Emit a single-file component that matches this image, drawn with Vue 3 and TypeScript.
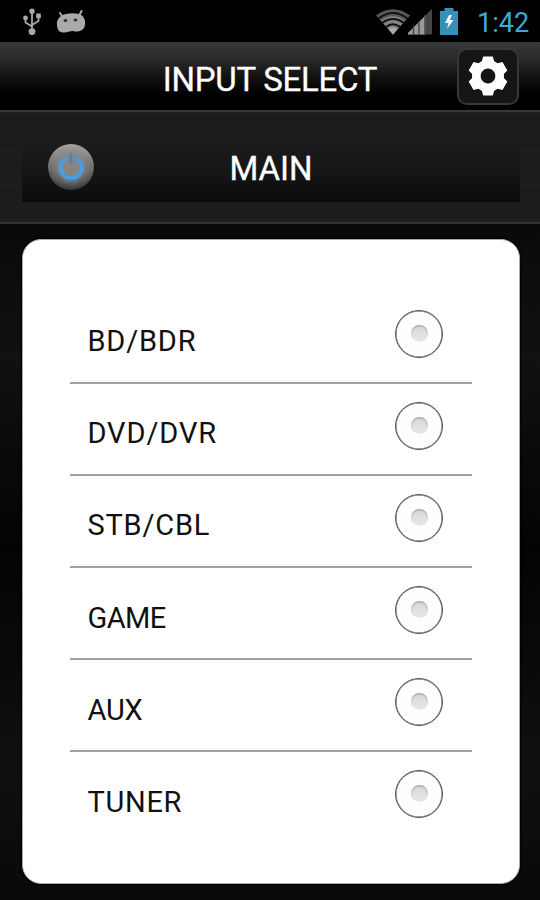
<script setup lang="ts">
import { ref } from 'vue'

interface InputSource {
  id: string
  label: string
  tracking: number
}

const sources: InputSource[] = [
  { id: 'bd', label: 'BD/BDR', tracking: 0.8 },
  { id: 'dvd', label: 'DVD/DVR', tracking: 0.9 },
  { id: 'stb', label: 'STB/CBL', tracking: 0.8 },
  { id: 'game', label: 'GAME', tracking: -0.6 },
  { id: 'aux', label: 'AUX', tracking: -0.2 },
  { id: 'tuner', label: 'TUNER', tracking: 0.7 },
]
const selected = ref<string | null>(null)
const teeth = [0, 60, 120, 180, 240, 300]
</script>

<template>
  <div class="screen">
    <div class="status">
      <svg class="usb" width="20" height="28" viewBox="0 0 20 28" fill="none" stroke="#aaa" stroke-width="1.8">
        <path d="M10 3V23M10 18.500L3.500 14.500V10M10 17L16.500 13V8" />
        <g fill="#aaa" stroke="none">
          <circle cx="10" cy="3.200" r="2.600" />
          <circle cx="10" cy="23.600" r="3.400" />
          <circle cx="3.500" cy="10" r="2.400" />
          <rect x="14.200" y="5.500" width="4.600" height="4.600" />
        </g>
      </svg>
      <svg class="droid" width="30" height="24" viewBox="0 0 30 24">
        <path d="M4 3l4 6M25.500 1l-3 6" stroke="#aaa" stroke-width="2" stroke-linecap="round" />
        <path d="M1 15C0 9 5 5 10 4C16 2.500 22 3 26 5.500C29 8 30 13 28.500 17C26 22 21 22 17 21C13 21 11 23 7 22.500C3 22.500 1 19 1 15Z" fill="#aaa" />
        <ellipse cx="9.500" cy="10.500" rx="1.900" ry="1.500" fill="#333" />
        <ellipse cx="19.500" cy="10" rx="1.900" ry="1.600" fill="#333" />
      </svg>
      <div class="status-right">
        <svg width="34" height="28" viewBox="0 0 34 28">
          <path d="M0 7.500Q17-5 34 7.500L17 26.500Z" fill="#595959" />
          <path d="M5 12.500Q17 4 29 12.500L17 26.500Z" fill="#858585" />
          <path d="M2.500 10.500Q17-.5 31.500 10.500M6 15Q17 7 28 15M9.700 19Q17 13.500 24.300 19" fill="none" stroke="#111" stroke-width="1.800" />
          <path d="M12.500 21Q17 17.800 21.500 21L17 26.500Z" fill="#aaa" />
        </svg>
        <svg class="signal" width="24" height="28" viewBox="0 0 24 28">
          <path d="M0 26.500V25L24 .8V26.500Z" fill="#454545" />
          <path d="M0 26.500V25L17.500 7.500V26.500Z" fill="#999" />
          <path d="M5.500 18V27M11 13V27M17 7V27" stroke="#444" stroke-width="1.400" />
        </svg>
        <svg class="battery" width="18" height="27" viewBox="0 0 18 27">
          <path d="M4.500 0H13.500V3H18V27H0V3H4.500Z" fill="#3591b9" />
          <path d="M9 7L5 15H8.500L7 21L13.500 12H9.800L12 7Z" fill="#eefaff" />
        </svg>
        <span class="clock">1:42</span>
      </div>
    </div>

    <header class="header">
      <h1>INPUT SELECT</h1>
      <button class="settings" aria-label="Settings">
        <svg width="42" height="42" viewBox="-21 -21 42 42">
          <g fill="#fff">
            <path v-for="a in teeth" :key="a" d="M-7-12L-4.800-19.500H4.800L7-12Z" :transform="`rotate(${a})`" />
          </g>
          <circle r="11.700" fill="none" stroke="#fff" stroke-width="8.600" />
        </svg>
      </button>
    </header>

    <section class="zone">
      <div class="zone-bar">
        <button class="power" aria-label="Power">
          <svg width="30" height="34" viewBox="-15 -17 30 34" fill="none">
            <path d="M-5.500-9A10.800 10.800 0 1 0 5.500-9" stroke="#4c9bdb" stroke-width="4.400" />
            <path d="M0-14V-3" stroke="#318bd8" stroke-width="2.600" />
            <path d="M-6 13.500H6" stroke="#258de6" stroke-width="3" stroke-dasharray="2 1.300" opacity=".7" />
          </svg>
        </button>
        <span class="zone-name">MAIN</span>
      </div>
    </section>

    <main class="content">
      <div class="card">
        <div v-for="s in sources" :key="s.id" class="row" @click="selected = s.id">
          <span class="label" :style="{ letterSpacing: s.tracking + 'px' }">{{ s.label }}</span>
          <span class="radio"><i :class="{ on: selected === s.id }"></i></span>
        </div>
      </div>
    </main>
  </div>
</template>

<style>
body {
  background: #000;
}
</style>

<style scoped>
* {
  box-sizing: border-box;
}
.screen {
  width: 540px;
  height: 900px;
  display: flex;
  flex-direction: column;
  overflow: hidden;
  background: #0a0a0a;
  font-family: Roboto, "Liberation Sans", sans-serif;
}
.status {
  height: 42px;
  flex: none;
  background: #000;
  display: flex;
  align-items: flex-start;
  padding: 8px 11px 0 22px;
}
.droid {
  margin: 2px 0 0 14px;
}
.status-right {
  display: flex;
  margin-left: auto;
}
.signal {
  margin-left: -2px;
}
.battery {
  margin-left: 8px;
}
.clock {
  margin-left: 19px;
  width: 52px;
  font-size: 27px;
  line-height: 31px;
  color: #40a9d3;
  white-space: nowrap;
}
.header {
  height: 70px;
  flex: none;
  display: grid;
  grid-template-columns: 83px 1fr 83px;
  align-items: center;
  background: linear-gradient(#383838, #292929 26%, #101010 54%, #000 78%);
  border-bottom: 2px solid #383838;
}
h1 {
  grid-column: 2;
  margin: 7px 0 0;
  text-align: center;
  font-size: 33px;
  line-height: 38px;
  font-weight: 400;
  letter-spacing: -.25px;
  color: #fff;
  white-space: nowrap;
  -webkit-text-stroke: .3px #fff;
}
button {
  padding: 0;
  display: flex;
  align-items: center;
  justify-content: center;
}
.settings {
  width: 62px;
  height: 57px;
  border: 2px solid #373737;
  border-radius: 10px;
  background: #151515;
}
.zone {
  height: 112px;
  flex: none;
  padding: 23px 20px 21px 22px;
  border-bottom: 2px solid #303030;
  background:
    repeating-linear-gradient(0deg, transparent 0 4px, rgba(0, 0, 0, .14) 4px 5px, transparent 5px 9px),
    #1c1e1d;
}
.zone-bar {
  height: 67px;
  display: grid;
  grid-template-columns: 98px 1fr 98px;
  align-items: center;
  background: linear-gradient(#1c1d1d, #171717 45%, #0c0c0c);
}
.power {
  width: 46px;
  height: 46px;
  margin: 0 0 4px 26px;
  border: 0;
  border-radius: 50%;
  background: radial-gradient(circle at 50% 50%, #898482 0 24%, transparent 65%), linear-gradient(#a3a3a3, #696766 58%, #383838);
}
.zone-name {
  text-align: center;
  font-size: 33px;
  line-height: 40px;
  color: #fff;
  -webkit-text-stroke: .3px #fff;
}
.content {
  flex: 1;
  padding: 15px 20px 16px 22px;
  background: linear-gradient(#0a0a0a, #111 20%, #030303 48%, #101010 80%, #090909);
  border-bottom: 1px solid #000;
}
.card {
  height: 645px;
  padding: 51.500px 47px 0;
  border: 1px solid #aaa;
  border-radius: 19px;
  background: #fff;
  box-shadow: 0 0 2px 1px #000;
}
.row {
  height: 92.2px;
  display: flex;
  justify-content: space-between;
  border-bottom: 2px solid #a0a0a0;
  padding: 18px 29px 0 17.500px;
}
.row:last-child {
  border-bottom: 0;
}
.label {
  margin-top: 13.500px;
  font-size: 29px;
  line-height: 36px;
  color: #111;
}
.radio {
  width: 48px;
  height: 48px;
  border: 1.500px solid #555;
  border-radius: 50%;
  display: flex;
  align-items: center;
  justify-content: center;
  background: #fefefe;
  box-shadow: inset 0 0 0 .5px #666;
}
.radio i {
  width: 17px;
  height: 17px;
  margin-bottom: 1px;
  border-radius: 50%;
  background: linear-gradient(#d8d8d8, #e8e8e8);
  box-shadow: inset 0 1.500px 1.500px #aaa;
}
.radio i.on {
  background: #328fd0;
}
</style>
